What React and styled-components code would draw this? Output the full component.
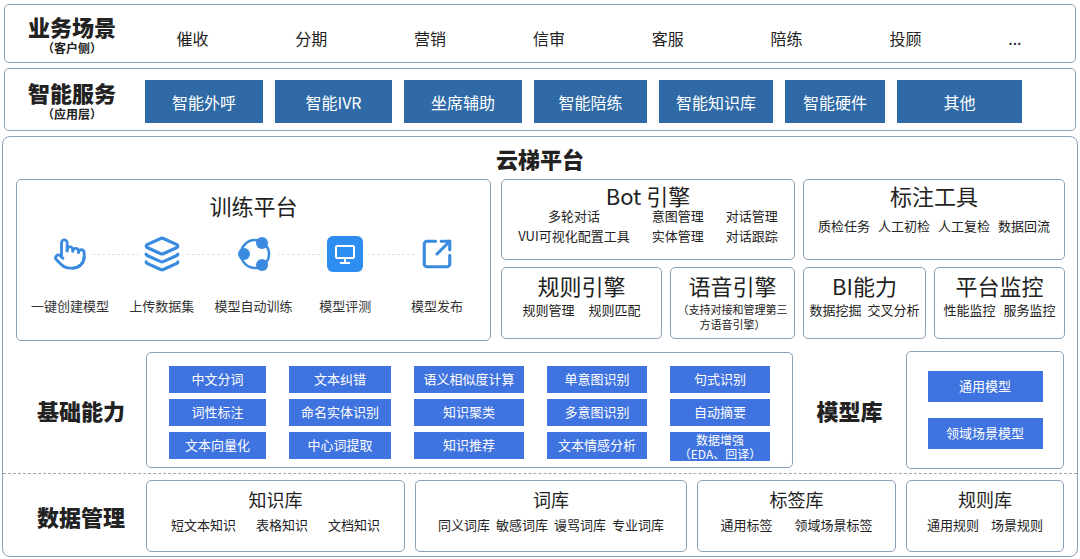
import React from "react";
import styled, { createGlobalStyle } from "styled-components";
import { Pointer, Layers, SquareArrowOutUpRight } from "lucide-react";

const G = createGlobalStyle`
  body{margin:0;background:#fff;font-family:"Noto Sans CJK SC","Noto Sans",sans-serif;color:#222;}
`;
const Page = styled.div`width:1080px;height:559px;padding:4px 2px 2px 2px;box-sizing:border-box;display:flex;flex-direction:column;gap:5px;`;
const Band = styled.div`height:${p=>p.h}px;border:1.5px solid #8aa2b8;border-radius:5px;display:flex;align-items:center;box-sizing:border-box;margin:0 2px;`;
const Label = styled.div`width:128px;flex:none;display:flex;flex-direction:column;align-items:center;padding-left:6px;box-sizing:border-box;
  b{font-size:22px;font-weight:900;line-height:28px;} small{font-size:12px;font-weight:700;line-height:16px;}`;
const Items = styled.div`flex:1;display:flex;justify-content:space-around;font-size:16px;padding:8px 10px 0 0;`;
const Btns = styled.div`display:flex;gap:12px;margin-left:12px;margin-top:4px;`;
const Btn = styled.div`width:${p=>p.w}px;height:43px;background:#2f6aa7;color:#fff;font-size:16px;display:flex;align-items:center;justify-content:center;`;
const Platform = styled.div`flex:1;border:1.5px solid #8aa2b8;border-radius:8px;box-sizing:border-box;display:flex;flex-direction:column;padding:0 13px 0 13px;`;
const PTitle = styled.div`text-align:center;font-size:22px;font-weight:900;height:42px;line-height:42px;`;
const Top = styled.div`display:flex;gap:10px;`;
const Box = styled.div`border:1.3px solid #8aa2b8;border-radius:5px;box-sizing:border-box;display:flex;flex-direction:column;align-items:center;
  width:${p=>p.w?p.w+"px":"auto"};height:${p=>p.h}px;flex:${p=>p.w?"none":"1"};`;
const BT = styled.div`font-size:${p=>p.s||22}px;margin-top:${p=>p.mt||4}px;line-height:1.2;`;
const Small = styled.div`font-size:${p=>p.fs||13}px;display:flex;gap:${p=>p.g||10}px;margin-top:${p=>p.mt||4}px;justify-content:center;text-align:center;line-height:1.5;`;
const RightGrid = styled.div`display:grid;grid-template-columns:161px 125px 123px 131px;grid-template-rows:81px 72px;column-gap:8px;row-gap:7px;
  > :nth-child(1){grid-column:1/3;} > :nth-child(2){grid-column:3/5;}`;
const Steps = styled.div`display:flex;justify-content:space-between;width:100%;padding:0 8px;box-sizing:border-box;margin-top:16px;position:relative;`;
const Step = styled.div`display:flex;flex-direction:column;align-items:center;gap:22px;font-size:13px;width:90px;color:#333;z-index:1;`;
const Ico = styled.div`height:40px;display:flex;align-items:center;justify-content:center;color:#3a8be0;background:#fff;padding:0 4px;`;
const Line = styled.div`position:absolute;left:50px;right:50px;top:20px;border-top:1px dashed #dde4ea;`;
const Row = styled.div`display:flex;align-items:center;`;
const SideLabel = styled.div`width:${p=>p.w}px;flex:none;font-size:22px;font-weight:900;text-align:center;padding-right:${p=>p.pr||0}px;box-sizing:border-box;`;
const ChipGrid = styled.div`display:grid;grid-template-columns:97px 102px 110px 100px 100px;column-gap:23px;row-gap:6px;padding:13px 20px;`;
const Chip = styled.div`background:#3f73e0;color:#fff;font-size:${p=>p.fs||13}px;height:${p=>p.h||27}px;width:${p=>p.w?p.w+"px":"auto"};display:flex;align-items:center;justify-content:center;text-align:center;line-height:1.1;`;
const Dash = styled.div`border-top:1.5px dashed #9aa9b8;margin:4px -13px 6px;`;
const Data = styled.div`display:flex;gap:10px;`;

const Circle = () => (
  <svg width="40" height="40" viewBox="0 0 40 40">
    <circle cx="21" cy="20" r="14" fill="none" stroke="#3a8be0" strokeWidth="2.5"/>
    <circle cx="10" cy="20" r="6" fill="#3a8be0"/><circle cx="28" cy="9" r="6" fill="#3a8be0"/><circle cx="28" cy="31" r="6" fill="#3a8be0"/>
  </svg>);
const Mon = () => (
  <svg width="38" height="38" viewBox="0 0 38 38">
    <rect x="1" y="1" width="36" height="36" rx="6" fill="#2e8df0"/>
    <rect x="10" y="11" width="18" height="12" rx="1" fill="none" stroke="#fff" strokeWidth="2"/>
    <path d="M19 23v4M14 28h10" stroke="#fff" strokeWidth="2"/>
  </svg>);

export default function App(){
  return <Page><G/>
    <Band h={59}>
      <Label><b>业务场景</b><small>（客户侧）</small></Label>
      <Items>{["催收","分期","营销","信审","客服","陪练","投顾","..."].map(t=><span key={t}>{t}</span>)}</Items>
    </Band>
    <Band h={63}>
      <Label><b>智能服务</b><small>（应用层）</small></Label>
      <Btns>{[["智能外呼",118],["智能IVR",117],["坐席辅助",118],["智能陪练",113],["智能知识库",114],["智能硬件",100],["其他",125]].map(([t,w])=><Btn key={t} w={w}>{t}</Btn>)}</Btns>
    </Band>
    <Platform>
      <PTitle>云梯平台</PTitle>
      <Top>
        <Box w={475} h={162}>
          <BT mt={12}>训练平台</BT>
          <Steps><Line/>
            <Step><Ico><Pointer size={34} strokeWidth={2}/></Ico>一键创建模型</Step>
            <Step><Ico><Layers size={38} strokeWidth={2}/></Ico>上传数据集</Step>
            <Step><Ico><Circle/></Ico>模型自动训练</Step>
            <Step><Ico><Mon/></Ico>模型评测</Step>
            <Step><Ico><SquareArrowOutUpRight size={34} strokeWidth={2.2}/></Ico>模型发布</Step>
          </Steps>
        </Box>
        <RightGrid>
          <Box h={81}><BT mt={2}>Bot 引擎</BT>
            <Small mt={-2} g={22}><div>多轮对话<br/>VUI可视化配置工具</div><div>意图管理<br/>实体管理</div><div>对话管理<br/>对话跟踪</div></Small></Box>
          <Box h={81}><BT mt={2}>标注工具</BT><Small mt={8} g={8}><span>质检任务</span><span>人工初检</span><span>人工复检</span><span>数据回流</span></Small></Box>
          <Box h={72}><BT mt={4}>规则引擎</BT><Small mt={2} g={14}><span>规则管理</span><span>规则匹配</span></Small></Box>
          <Box h={72}><BT mt={4}>语音引擎</BT><Small mt={0} fs={11}><div style={{lineHeight:1.3}}>（支持对接和管理第三<br/>方语音引擎）</div></Small></Box>
          <Box h={72}><BT mt={4}>BI能力</BT><Small mt={2} g={6}><span>数据挖掘</span><span>交叉分析</span></Small></Box>
          <Box h={72}><BT mt={4}>平台监控</BT><Small mt={2} g={8}><span>性能监控</span><span>服务监控</span></Small></Box>
        </RightGrid>
      </Top>
      <Row style={{marginTop:10}}>
        <SideLabel w={130}>基础能力</SideLabel>
        <Box w={647} h={116}>
          <ChipGrid>
            {["中文分词","文本纠错","语义相似度计算","单意图识别","句式识别","词性标注","命名实体识别","知识聚类","多意图识别","自动摘要","文本向量化","中心词提取","知识推荐","文本情感分析"].map(t=><Chip key={t}>{t}</Chip>)}
            <Chip h={29} fs={12}>数据增强<br/>（EDA、回译）</Chip>
          </ChipGrid>
        </Box>
        <SideLabel w={113}>模型库</SideLabel>
        <Box w={158} h={118} style={{justifyContent:"center",gap:16}}>
          <Chip w={115} h={31}>通用模型</Chip><Chip w={115} h={31}>领域场景模型</Chip>
        </Box>
      </Row>
      <Dash/>
      <Row>
        <SideLabel w={130}>数据管理</SideLabel>
        <Data>
          <Box w={259} h={72}><BT s={18} mt={8}>知识库</BT><Small mt={4} g={20}><span>短文本知识</span><span>表格知识</span><span>文档知识</span></Small></Box>
          <Box w={272} h={72}><BT s={18} mt={8}>词库</BT><Small mt={4} g={6}><span>同义词库</span><span>敏感词库</span><span>谩骂词库</span><span>专业词库</span></Small></Box>
          <Box w={199} h={72}><BT s={18} mt={8}>标签库</BT><Small mt={4} g={22}><span>通用标签</span><span>领域场景标签</span></Small></Box>
          <Box w={158} h={72}><BT s={18} mt={8}>规则库</BT><Small mt={4} g={12}><span>通用规则</span><span>场景规则</span></Small></Box>
        </Data>
      </Row>
    </Platform>
  </Page>;
}
